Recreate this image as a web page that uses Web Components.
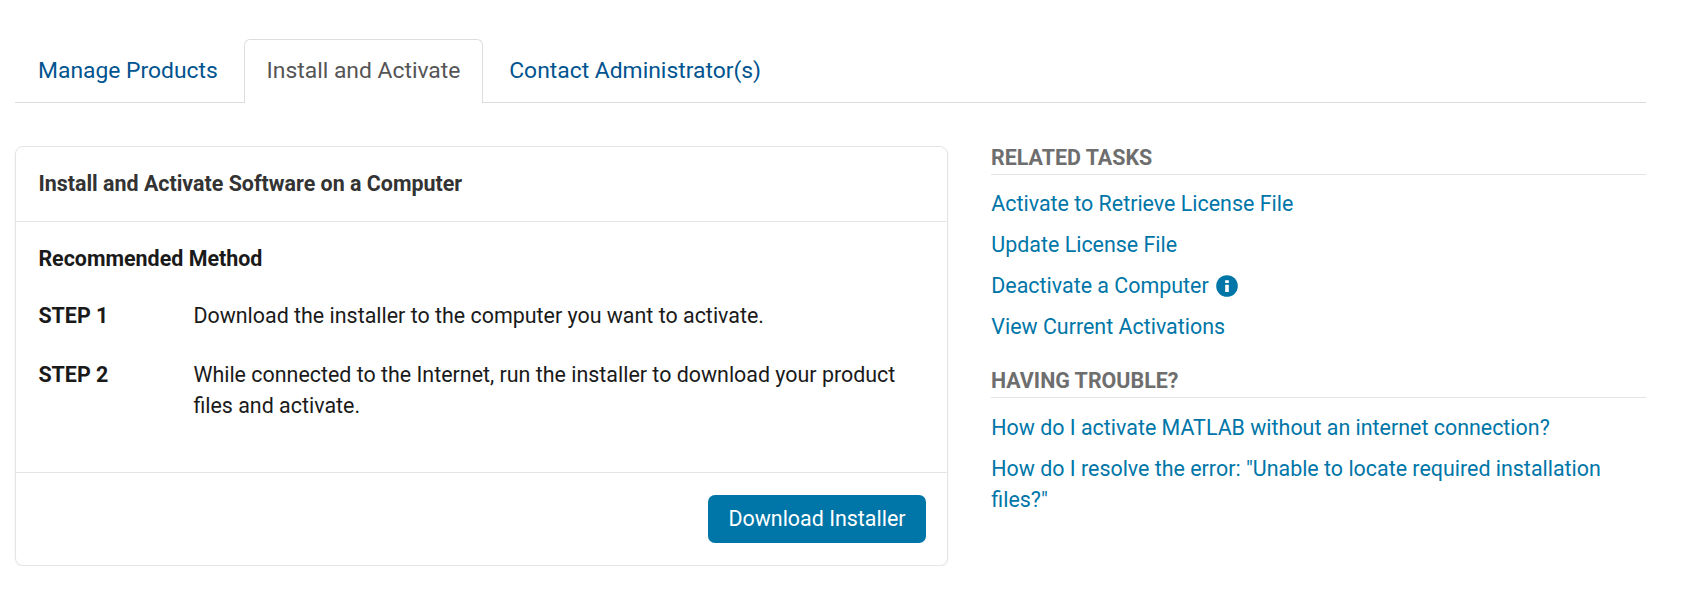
<!DOCTYPE html>
<html lang="en"><head><meta charset="utf-8"><title>Install and Activate</title>
<style>
html,body{margin:0;background:#fff}
body{font:21.43px/31px Roboto,sans-serif;color:#1a1a1a}
</style></head><body>
<license-page></license-page>
<script>
const define=(name,html)=>customElements.define(name,class extends HTMLElement{
  constructor(){super();this.attachShadow({mode:"open"}).innerHTML=html;}
});
define("nav-tab",`<style>
:host{display:block;box-sizing:border-box;height:64px;padding:15px 22px 0;border:1px solid transparent;border-bottom:0;border-radius:6px 6px 0 0;color:#00548f;font-size:22.86px;line-height:31px;white-space:nowrap}
:host([active]){color:#555;background:#fff;border-color:#ddd}
</style><slot></slot>`);
define("nav-tabs",`<style>:host{display:flex;gap:2.8px;height:63px;border-bottom:1px solid #ddd}</style><slot></slot>`);
define("step-row",`<style>
:host{display:grid;grid-template-columns:155px 1fr;margin-bottom:28px}b{font-weight:700}
</style><b><slot name="label"></slot></b><div><slot></slot></div>`);
define("action-button",`<style>
:host{display:block}
button{display:block;font:inherit;color:#fff;background:#0076a8;border:0;border-radius:7px;height:48px;width:218px;padding:8px 0 9px}
</style><button><slot></slot></button>`);
define("install-card",`<style>
:host{display:block;box-sizing:border-box;width:933px;height:420px;border:1px solid #e4e4e4;border-radius:8px;box-shadow:0 1px 2px #0001}
header{box-sizing:border-box;height:75px;padding:21px 22.4px;font-weight:700;color:#333;border-bottom:1px solid #e4e4e4}
section{box-sizing:border-box;height:251px;padding:21px 22.4px;border-bottom:1px solid #e4e4e4}
h3{font:inherit;font-weight:700;margin:0 0 26px}
footer{display:flex;justify-content:flex-end;padding:22px 21px}
</style><header><slot name="title"></slot></header><section><h3><slot name="method"></slot></h3><slot></slot></section><footer><slot name="action"></slot></footer>`);
define("task-group",`<style>
:host{display:block}
h4{font:inherit;font-weight:700;color:#6e6e6e;margin:0;line-height:23px;height:28px;border-bottom:1px solid #e4e4e4}
div{padding-top:var(--list-gap,13px);display:grid;gap:10px}
</style><h4><slot name="title"></slot></h4><div><slot></slot></div>`);
define("task-link",`<style>
:host{display:flex;align-items:center;color:#0076a8;padding-left:.3px}
</style><span><slot></slot></span><slot name="icon"></slot>`);
define("info-icon",`<style>:host{display:block;width:22px;height:22px;margin-left:7.5px}svg{display:block}</style>
<svg width="22" height="22" viewBox="0 0 22 22"><circle cx="11" cy="11" r="10.8" fill="#0076a8"/><path d="M9.2 5.3h3.6v2.8H9.2zM9.2 9.7h3.6v7.3H9.2z" fill="#fff"/></svg>`);
define("license-page",`<style>
:host{display:block;padding:39px 51px 0 15px}
main{display:flex;gap:43px;padding-top:43px}
aside{flex:1}
task-group+task-group{margin-top:27px;--list-gap:14px}
</style>
<nav-tabs><nav-tab>Manage Products</nav-tab><nav-tab active>Install and Activate</nav-tab><nav-tab>Contact Administrator(s)</nav-tab></nav-tabs>
<main><install-card><span slot="title">Install and Activate Software on a Computer</span><span slot="method">Recommended Method</span>
<step-row><span slot="label">STEP 1</span>Download the installer to the computer you want to activate.</step-row>
<step-row><span slot="label">STEP 2</span>While connected to the Internet, run the installer to download your product files and activate.</step-row>
<action-button slot="action">Download Installer</action-button></install-card>
<aside><task-group><span slot="title">RELATED TASKS</span><task-link>Activate to Retrieve License File</task-link><task-link>Update License File</task-link><task-link>Deactivate a Computer<info-icon slot="icon"></info-icon></task-link><task-link>View Current Activations</task-link></task-group>
<task-group><span slot="title">HAVING TROUBLE?</span><task-link>How do I activate MATLAB without an internet connection?</task-link><task-link>How do I resolve the error: "Unable to locate required installation files?"</task-link></task-group></aside></main>`);
</script></body></html>
